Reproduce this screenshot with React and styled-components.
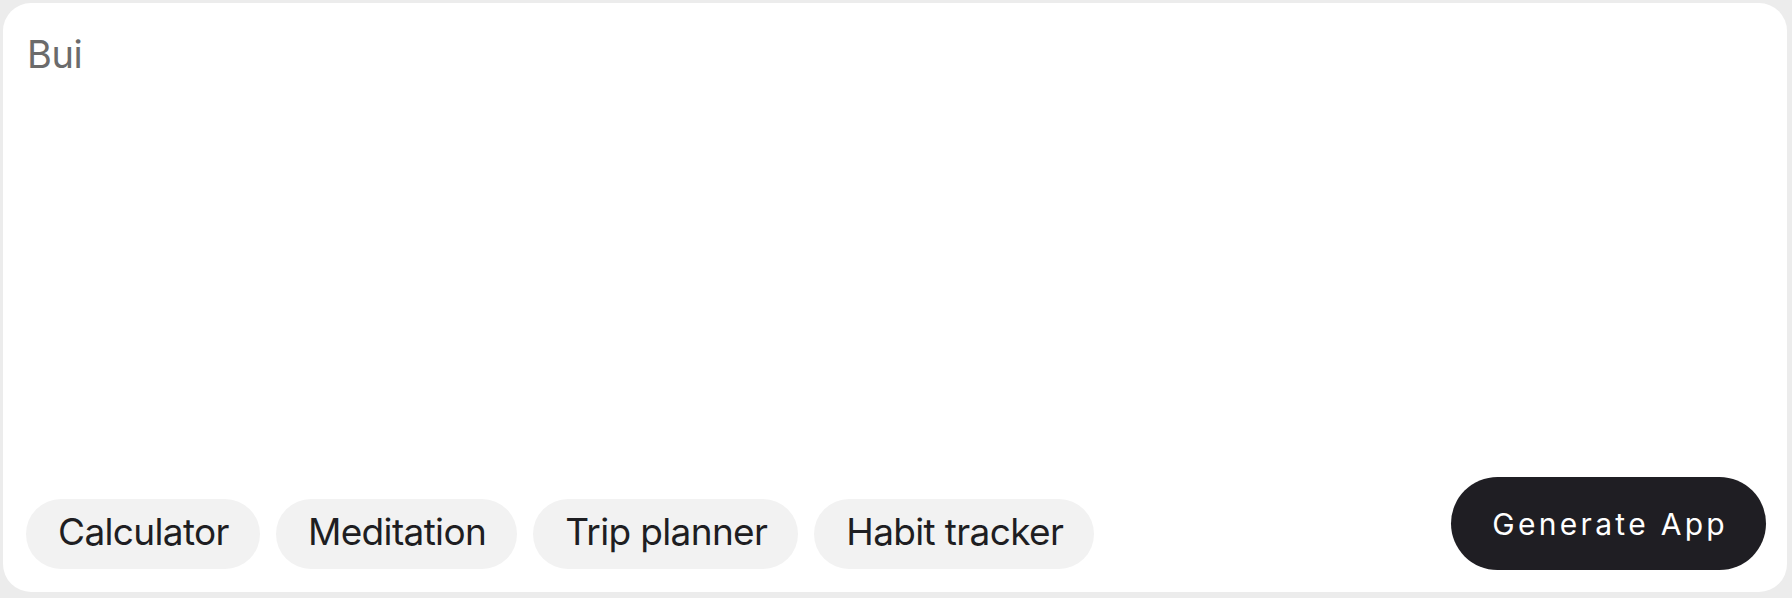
import React from "react";
import styled, { createGlobalStyle } from "styled-components";

const Global = createGlobalStyle`
  html, body { margin: 0; padding: 0; background: #ececec; }
  body { font-family: Inter, "Liberation Sans", sans-serif; }
  * { box-sizing: border-box; }
`;

const Page = styled.div`
  width: 1792px;
  height: 598px;
  padding: 3px 5px 6px 3px;
  background: #ececec;
`;

const Card = styled.div`
  height: 100%;
  background: #ffffff;
  border-radius: 28px;
  padding: 27px 21px 22px 23px;
  display: flex;
  flex-direction: column;
`;

const Prompt = styled.textarea`
  flex: 1;
  border: none;
  outline: none;
  resize: none;
  padding: 1px 0 0 1px;
  margin: 0;
  background: transparent;
  font-family: Inter, "Liberation Sans", sans-serif;
  font-size: 38px;
  line-height: 1.25;
  color: #6b6b6b;
  letter-spacing: -0.4px;
`;

const Bottom = styled.div`
  display: flex;
  align-items: flex-end;
  justify-content: space-between;
`;

const Chips = styled.div`
  display: flex;
  gap: 16px;
  padding-bottom: 1px;
`;

const Chip = styled.button`
  height: 70px;
  padding: 0 31px 5px 32px;
  border: none;
  border-radius: 35px;
  background: #f2f2f2;
  color: #1e1e22;
  font-family: Inter, "Liberation Sans", sans-serif;
  font-size: 37px;
  letter-spacing: -0.65px;
  display: flex;
  align-items: center;
  cursor: pointer;
`;

const Generate = styled.button`
  height: 93px;
  padding: 0 38px 0 41px;
  border: none;
  border-radius: 47px;
  background: #1f1e23;
  color: #ffffff;
  font-family: Inter, "Liberation Sans", sans-serif;
  font-size: 30px;
  letter-spacing: 3.3px;
  display: flex;
  align-items: center;
  cursor: pointer;
`;

const suggestions = ["Calculator", "Meditation", "Trip planner", "Habit tracker"];

export default function App() {
  return (
    <>
      <Global />
      <Page>
        <Card>
          <Prompt defaultValue="Bui" spellCheck={false} />
          <Bottom>
            <Chips>
              {suggestions.map((s) => (
                <Chip key={s}>{s}</Chip>
              ))}
            </Chips>
            <Generate>Generate App</Generate>
          </Bottom>
        </Card>
      </Page>
    </>
  );
}
